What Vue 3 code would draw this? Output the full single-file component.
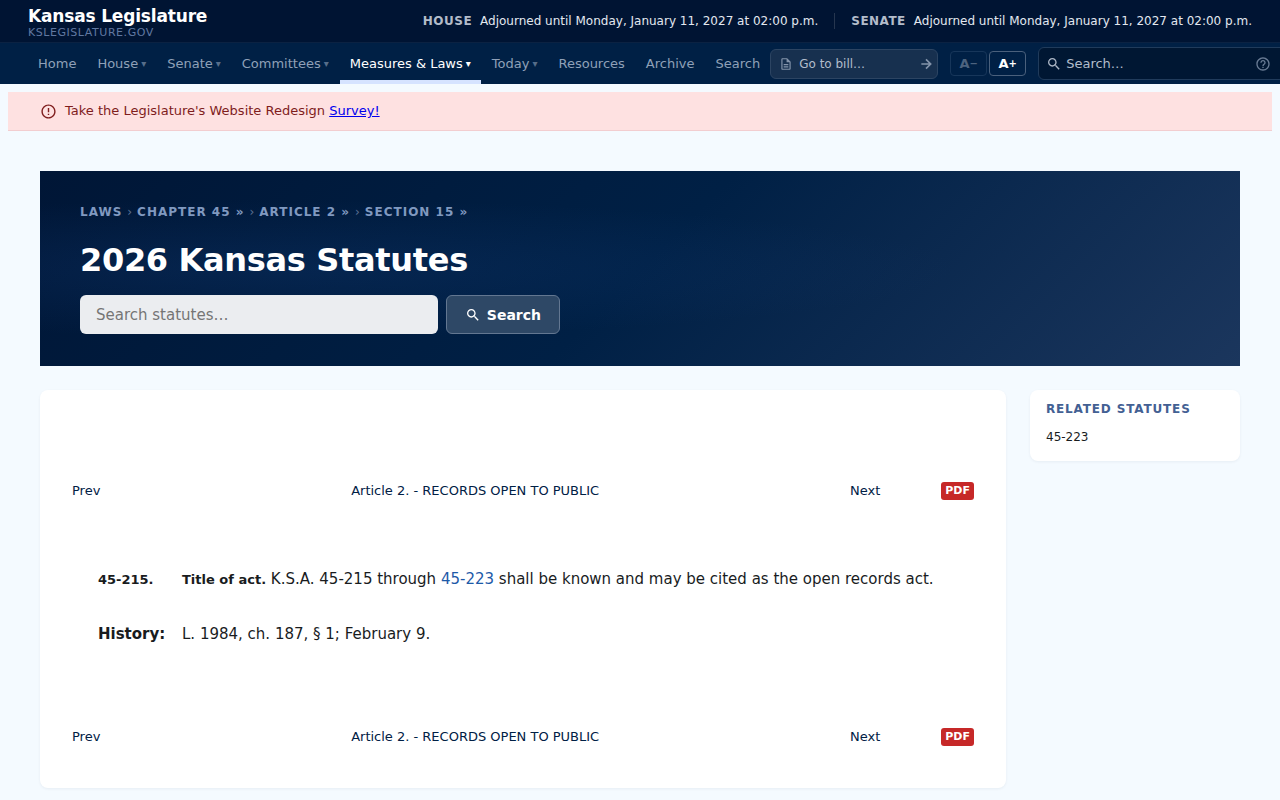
<template>
  <div class="page">
    <header class="site-header">
      <div class="topbar">
        <a class="brand" href="#">
          <span class="brand-name">Kansas Legislature</span>
          <span class="brand-url">KSLEGISLATURE.GOV</span>
        </a>
        <div class="chambers">
          <div v-for="chamber in chambers" :key="chamber.name" class="chamber">
            <strong>{{ chamber.name }}</strong>
            <span>{{ chamber.status }}</span>
          </div>
        </div>
      </div>

      <div class="navbar">
        <nav class="nav-links">
          <a
            v-for="item in navItems"
            :key="item.label"
            href="#"
            :class="{ 'nav-link': true, 'is-active': item.active }"
          >
            {{ item.label }}<span v-if="item.menu" class="caret">▾</span>
          </a>
        </nav>

        <form class="bill-form" @submit.prevent>
          <svg class="icon" viewBox="0 0 24 24" width="14" height="14" aria-hidden="true">
            <path d="M8 16h8v2H8zm0-4h8v2H8zm6-10H6c-1.1 0-2 .9-2 2v16c0 1.1.89 2 1.99 2H18c1.1 0 2-.9 2-2V8l-6-6zm4 18H6V4h7v5h5v11z" />
          </svg>
          <input v-model="bill" type="text" placeholder="Go to bill…" aria-label="Go to bill" />
          <button type="submit" aria-label="Go">
            <svg class="arrow" viewBox="0 0 24 24" width="16" height="16" aria-hidden="true">
              <path d="M5 12h14M12 5l7 7-7 7" />
            </svg>
          </button>
        </form>

        <div class="text-size">
          <button type="button" disabled aria-label="Decrease text size">A<span>−</span></button>
          <button type="button" aria-label="Increase text size">A<span>+</span></button>
        </div>

        <form class="site-search" @submit.prevent>
          <svg class="icon" viewBox="0 0 24 24" width="16" height="16" aria-hidden="true">
            <path :d="searchIcon" />
          </svg>
          <input v-model="siteQuery" type="text" placeholder="Search…" aria-label="Search" />
          <button type="button" aria-label="Search help">
            <svg class="icon" viewBox="0 0 24 24" width="16" height="16" aria-hidden="true">
              <path d="M11 18h2v-2h-2v2zm1-16C6.48 2 2 6.48 2 12s4.48 10 10 10 10-4.48 10-10S17.52 2 12 2zm0 18c-4.41 0-8-3.59-8-8s3.59-8 8-8 8 3.59 8 8-3.59 8-8 8zm0-14c-2.21 0-4 1.79-4 4h2c0-1.1.9-2 2-2s2 .9 2 2c0 2-3 1.75-3 5h2c0-2.25 3-2.5 3-5 0-2.21-1.79-4-4-4z" />
            </svg>
          </button>
        </form>
      </div>
    </header>

    <div class="notice">
      <svg class="icon" viewBox="0 0 24 24" width="17" height="17" aria-hidden="true">
        <path d="M11 15h2v2h-2zm0-8h2v6h-2zm.99-5C6.47 2 2 6.48 2 12s4.47 10 9.99 10C17.52 22 22 17.52 22 12S17.52 2 11.99 2zM12 20c-4.42 0-8-3.58-8-8s3.58-8 8-8 8 3.58 8 8-3.58 8-8 8z" />
      </svg>
      <span>Take the Legislature's Website Redesign <a href="#">Survey!</a></span>
    </div>

    <main class="content">
      <section class="hero">
        <nav class="breadcrumb" aria-label="Breadcrumb">
          <template v-for="(crumb, index) in crumbs" :key="crumb">
            <span v-if="index" class="sep">›</span>
            <a href="#">{{ crumb }}</a>
          </template>
        </nav>
        <h1>2026 Kansas Statutes</h1>
        <form class="statute-search" @submit.prevent>
          <input v-model="statuteQuery" type="text" placeholder="Search statutes…" aria-label="Search statutes" />
          <button type="submit">
            <svg class="icon" viewBox="0 0 24 24" width="16" height="16" aria-hidden="true">
              <path :d="searchIcon" />
            </svg>
            Search
          </button>
        </form>
      </section>

      <div class="columns">
        <article class="card statute">
          <nav class="pager">
            <div class="pager-links">
              <a v-for="link in pagerLinks" :key="link" href="#">{{ link }}</a>
            </div>
            <a class="pdf" href="#">PDF</a>
          </nav>

          <div class="statute-body">
            <strong class="number">45-215.</strong>
            <p>
              <strong class="caption">Title of act.</strong> K.S.A. 45-215 through
              <a href="#">45-223</a> shall be known and may be cited as the open records act.
            </p>
            <strong>History:</strong>
            <p>L. 1984, ch. 187, § 1; February 9.</p>
          </div>

          <nav class="pager">
            <div class="pager-links">
              <a v-for="link in pagerLinks" :key="link" href="#">{{ link }}</a>
            </div>
            <a class="pdf" href="#">PDF</a>
          </nav>
        </article>

        <aside class="card related">
          <h2>Related Statutes</h2>
          <a href="#">45-223</a>
        </aside>
      </div>
    </main>
  </div>
</template>

<script setup>
import { ref } from 'vue';

const bill = ref('');
const siteQuery = ref('');
const statuteQuery = ref('');

const chambers = [
  { name: 'HOUSE', status: 'Adjourned until Monday, January 11, 2027 at 02:00 p.m.' },
  { name: 'SENATE', status: 'Adjourned until Monday, January 11, 2027 at 02:00 p.m.' },
];

const navItems = [
  { label: 'Home' },
  { label: 'House', menu: true },
  { label: 'Senate', menu: true },
  { label: 'Committees', menu: true },
  { label: 'Measures & Laws', menu: true, active: true },
  { label: 'Today', menu: true },
  { label: 'Resources' },
  { label: 'Archive' },
  { label: 'Search' },
];

const crumbs = ['Laws', 'Chapter 45 »', 'Article 2 »', 'Section 15 »'];
const pagerLinks = ['Prev', 'Article 2. - RECORDS OPEN TO PUBLIC', 'Next'];

// Used in the top bar and in the hero
const searchIcon =
  'M15.5 14h-.79l-.28-.27C15.41 12.59 16 11.11 16 9.5 16 5.91 13.09 3 9.5 3S3 5.91 3 9.5 5.91 16 9.5 16c1.61 0 3.09-.59 4.23-1.57l.27.28v.79l5 4.99L20.49 19l-4.99-5zm-6 0C7.01 14 5 11.99 5 9.5S7.01 5 9.5 5 14 7.01 14 9.5 11.99 14 9.5 14z';
</script>

<style>
body {
  background-color: #f4faff;
}
</style>

<style scoped>
.page {
  min-height: 100vh;
  overflow-x: hidden;
  font-family: "DejaVu Sans", sans-serif;
  font-size: 13px;
  color: #191c1e;
}

.page *,
.page *::before {
  box-sizing: border-box;
}

a {
  color: inherit;
  text-decoration: none;
}

input,
button {
  font-family: inherit;
  margin: 0;
}

.icon {
  display: block;
  flex: none;
  fill: currentColor;
}

.arrow {
  display: block;
  fill: none;
  stroke: currentColor;
  stroke-width: 2.5;
}

/* Header */
.site-header {
  background-color: #002045;
}

.topbar {
  display: flex;
  align-items: center;
  justify-content: space-between;
  height: 43px;
  padding: 0 28px;
  background-color: #001433;
  border-bottom: 1px solid #0b2242;
}

.brand {
  display: flex;
  flex-direction: column;
  padding-top: 4px;
}

.brand-name {
  font-size: 17px;
  line-height: 20px;
  font-weight: bold;
  letter-spacing: -0.01em;
  color: #fff;
}

.brand-url {
  font-size: 11px;
  line-height: 14px;
  letter-spacing: 0.05em;
  color: #6078a1;
}

.chambers {
  display: flex;
  font-size: 12px;
  line-height: 16px;
  color: #e3e8f0;
}

.chamber {
  display: flex;
  gap: 8px;
}

.chamber + .chamber {
  margin-left: 16px;
  padding-left: 16px;
  border-left: 1px solid #26364f;
}

.chamber strong {
  letter-spacing: 0.04em;
  color: #b3bcca;
}

.navbar {
  display: flex;
  align-items: center;
  height: 41px;
  padding-left: 28px;
}

.nav-links {
  display: flex;
  flex: none;
  gap: 1px;
  align-self: stretch;
}

.nav-link {
  display: flex;
  align-items: center;
  padding: 4px 10px 0;
  border-bottom: 4px solid transparent;
  color: #8fa0b8;
  white-space: nowrap;
}

.nav-link.is-active {
  color: #fff;
  border-bottom-color: #d6e3ff;
}

.caret {
  margin-left: 3px;
  font-size: 10px;
  opacity: 0.6;
}

.is-active .caret {
  opacity: 1;
}

.bill-form {
  display: flex;
  flex: none;
  align-items: center;
  width: 168px;
  height: 30px;
  padding: 0 3px 0 8px;
  background-color: #17304f;
  border: 1px solid #2c4462;
  border-radius: 6px;
  color: #8494ab;
}

.bill-form input,
.site-search input {
  flex: 1;
  min-width: 0;
  padding: 0 6px;
  border: 0;
  outline: 0;
  background: none;
  font-size: 12px;
  color: #fff;
}

.bill-form input::placeholder,
.site-search input::placeholder {
  color: #b2bdcb;
  opacity: 1;
}

.bill-form button,
.site-search button {
  padding: 0;
  border: 0;
  background: none;
  color: inherit;
}

.text-size {
  display: flex;
  flex: none;
  gap: 2px;
  margin: 0 12px;
}

.text-size button {
  width: 37px;
  height: 25px;
  padding: 0;
  border: 1px solid #4a607c;
  border-radius: 4px;
  background: none;
  font-size: 13px;
  font-weight: bold;
  color: #fff;
}

.text-size button span {
  font-size: 10px;
  vertical-align: 1px;
}

.text-size button:disabled {
  border-color: #17365a;
  color: #4d637f;
}

.site-search {
  display: flex;
  flex: none;
  align-items: center;
  width: 252px;
  height: 33px;
  padding: 0 18px 0 7px;
  background-color: #001733;
  border: 1px solid #203b5b;
  border-radius: 6px;
  color: #acb7c6;
}

.site-search input {
  padding: 0 4px;
  font-size: 13px;
}

.site-search button {
  color: #687b94;
}

/* Survey notice */
.notice {
  display: flex;
  align-items: center;
  gap: 8px;
  height: 39px;
  margin: 8px 8px 0;
  padding: 0 32px;
  background-color: #fee1e1;
  border-bottom: 1px solid #f2cdd0;
  line-height: 18px;
  color: #7f1d1d;
}

.notice a {
  color: #0000ee;
  text-decoration: underline;
}

/* Hero */
.content {
  padding: 40px 40px 12px;
}

.hero {
  padding: 32px 40px;
  background:
    radial-gradient(ellipse at 20% 50%, rgba(22, 66, 130, 0.26) 0%, transparent 50%),
    linear-gradient(135deg, #001636 0%, #002045 50%, #1b365d 100%);
}

.breadcrumb {
  display: flex;
  gap: 5px;
  font-size: 12px;
  line-height: 18px;
  font-weight: bold;
  letter-spacing: 1px;
  text-transform: uppercase;
  color: #8099c0;
}

.sep {
  font-weight: normal;
  letter-spacing: 0;
  color: #5c7193;
}

.hero h1 {
  margin: 16px 0 12px;
  font-size: 32px;
  line-height: 46px;
  font-weight: bold;
  letter-spacing: -0.01em;
  color: #fff;
}

.statute-search {
  display: flex;
  gap: 8px;
  max-width: 480px;
}

.statute-search input {
  flex: 1;
  min-width: 0;
  height: 39px;
  padding: 0 16px;
  border: 0;
  border-radius: 6px;
  background-color: #ebedf0;
  font-size: 15px;
  color: #191c1e;
}

.statute-search input::placeholder {
  color: #757575;
}

.statute-search button {
  display: flex;
  align-items: center;
  gap: 6px;
  height: 39px;
  padding: 0 18px;
  border: 1px solid #637791;
  border-radius: 6px;
  background-color: #2e4866;
  font-size: 14px;
  font-weight: bold;
  color: #fff;
}

/* Statute text */
.columns {
  display: grid;
  grid-template-columns: minmax(0, 1fr) 210px;
  align-items: start;
  gap: 24px;
  margin-top: 24px;
}

.card {
  background-color: #fff;
  border-radius: 8px;
  box-shadow: 0 1px 3px rgba(0, 32, 69, 0.06);
}

.statute {
  padding: 92px 32px 42px;
}

.pager {
  display: flex;
  align-items: center;
  line-height: 18px;
  color: #002045;
}

.pager-links {
  display: flex;
  flex: 1;
  justify-content: space-between;
}

.pdf {
  margin-left: 61px;
  padding: 0 4px;
  border-radius: 3px;
  background-color: #c62828;
  font-size: 11px;
  font-weight: bold;
  color: #fff;
}

.statute-body {
  display: grid;
  grid-template-columns: 68px 1fr;
  align-items: baseline;
  column-gap: 16px;
  row-gap: 28px;
  margin: 66px 26px 81px;
  font-size: 15px;
  line-height: 26px;
}

.statute-body p {
  margin: 0;
}

.statute-body p a {
  color: #1d5aa8;
}

.number,
.caption {
  font-size: 13px;
}

.related {
  padding: 11px 16px 15px;
  font-size: 12px;
  line-height: 17px;
}

.related h2 {
  margin: 0 0 11px;
  font-size: 12px;
  line-height: 17px;
  letter-spacing: 0.07em;
  text-transform: uppercase;
  color: #436093;
}
</style>
